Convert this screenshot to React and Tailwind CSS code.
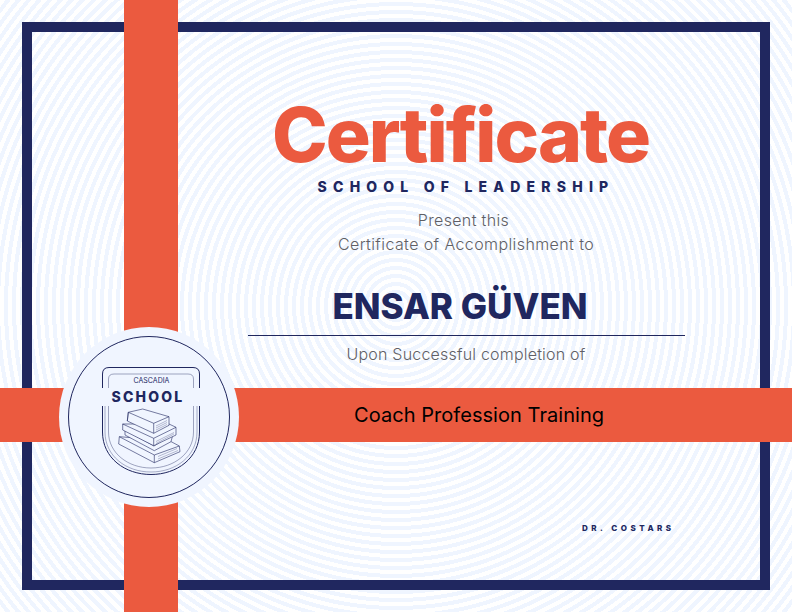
// book stack and shield traced from the badge in the reference
const Badge = () => (
  <svg viewBox="0 0 100 112" className="w-[100px] h-[112px] mt-[10px] ml-[4px]" fill="none" stroke="#20275f">
    <path d="M1.500 22V8Q1.500 1.500 8 1.500H92Q98.500 1.500 98.500 8V22" strokeWidth="1" />
    <path d="M1.500 40V66C1.500 92 24 108.500 50 108.500C76 108.500 98.500 92 98.500 66V40" strokeWidth="1" />
    <path d="M4 40V66C4 90 25 106 50 106C75 106 96 90 96 66V40" strokeWidth="0.6" opacity="0.6" />
    <path d="M7.500 22V13Q7.500 8 13 8H87Q92.500 8 92.500 13V22" strokeWidth="0.8" opacity="0.5" />
    <path d="M7.500 40V66C7.500 87 27 102 50 102C73 102 92.500 87 92.500 66V40" strokeWidth="0.8" opacity="0.5" />
    <g strokeWidth="0.6" strokeLinejoin="round">
      {/* bottom book */}
      <path d="M18.300 70.700L68.300 74.700L78.300 80L79 85.700L53.300 96.700L17.700 78Z" fill="#f0f5ff" />
      <path d="M18.300 70.700L53.300 89L78.300 80M53.300 89V96.700" />
      <path d="M57 90.500L76 82.500M57 93L77 84.500" strokeWidth="0.3" />
      {/* thin slanted book */}
      <path d="M24 69L53.300 84.700L70 75.700L72 68L53 80L24 64Z" fill="#f0f5ff" />
      {/* second book */}
      <path d="M21.700 58L68 58L75 61.300V69L52.700 79.700L21.700 64Z" fill="#f0f5ff" />
      <path d="M21.700 58L52.700 72.300L75 61.300M52.700 72.300V79.700" />
      <path d="M55 75.500L73 66.500M55 77.500L73 68" strokeWidth="0.3" />
      {/* top book */}
      <path d="M27.300 46.300L41.700 43L68 50.700V59.300L52.700 67.300L26.300 55Z" fill="#f0f5ff" />
      <path d="M27.300 46.300L26.300 55M27.300 46.300L52.700 57.300L68 50.700M52.700 57.300V67.300" />
      <path d="M55 60L66 54.500M55 62L66 56.500M55 64L66 58.500" strokeWidth="0.3" />
    </g>
  </svg>
);

export default function App() {
  return (
    <div className="relative w-[792px] h-[612px] overflow-hidden bg-[repeating-radial-gradient(circle_at_396px_306px,#ffffff_0px,#ffffff_4px,#eff5ff_4px,#eff5ff_8px)] font-['Inter',sans-serif]">
      <div className="p-[22px] h-full">
        <div className="h-full border-[10px] border-[#20275f] flex flex-col items-center pl-[216px] pr-[76px] pt-[63px]">
          <h1 className="mr-[11px] text-[75px] leading-[80px] font-extrabold tracking-[-2px] text-[#eb5a3f]">Certificate</h1>
          <p className="mt-[2px] text-[14px] leading-[20px] font-extrabold tracking-[6.200px] text-[#20275f]">SCHOOL OF LEADERSHIP</p>
          <p className="mt-[11px] mr-[5px] text-[16px] leading-[24px] font-light tracking-[0.350px] text-[#5f5f66]">Present this</p>
          <p className="text-[16px] leading-[24px] font-light tracking-[0.400px] text-[#5f5f66]">Certificate of Accomplishment to</p>
          <h2 className="mt-[28px] mr-[12px] text-[35px] leading-[44px] font-extrabold text-[#20275f]">ENSAR GÜVEN</h2>
          <div className="mt-[7px] w-[437px] h-px bg-[#20275f]" />
          <p className="mt-[6px] text-[16px] leading-[24px] font-light tracking-[0.200px] text-[#5f5f66]">Upon Successful completion of</p>
        </div>
      </div>

      {/* ribbons */}
      <div className="absolute left-[124px] top-0 w-[54px] h-full bg-[#eb5a3f]" />
      <div className="absolute left-0 top-[388px] w-full h-[54px] bg-[#eb5a3f] flex items-center pl-[354px]">
        <span className="text-[20px] tracking-[0.050px] text-black">Coach Profession Training</span>
      </div>

      {/* seal */}
      <div className="absolute left-[59px] top-[327px] w-[180px] h-[180px] rounded-full bg-[#f0f5ff] flex items-center justify-center">
        <div className="relative w-[162px] h-[162px] rounded-full border border-[#20275f] flex items-center justify-center">
          <Badge />
          <div className="absolute left-[30px] top-[39px] w-[102px] flex flex-col items-center">
            <span className="pl-[3px] text-[7px] leading-[10px] text-[#20275f]">CASCADIA</span>
            <span className="mt-[2px] pr-[4px] w-full text-center bg-[#f0f5ff] text-[14px] leading-[18px] font-extrabold tracking-[2.200px] text-[#20275f]">SCHOOL</span>
          </div>
        </div>
      </div>

      <span className="absolute left-[582px] top-[522px] text-[8px] leading-[12px] font-extrabold tracking-[3.500px] text-[#20275f]">DR. COSTARS</span>
    </div>
  );
}
